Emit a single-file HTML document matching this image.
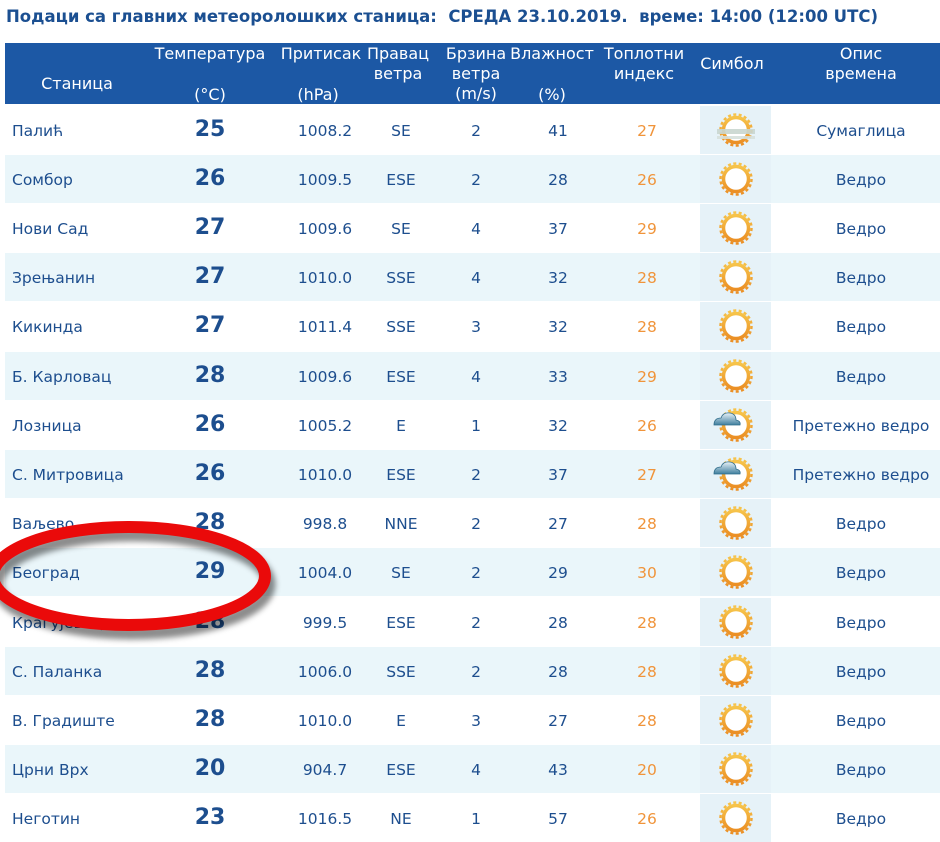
<!DOCTYPE html>
<html><head><meta charset="utf-8">
<style>
html,body{margin:0;padding:0;background:#fff;}
body{width:940px;height:830px;overflow:hidden;position:relative;font-family:"DejaVu Sans","Liberation Sans",sans-serif;}
.title{position:absolute;left:6px;top:7px;font-size:16.5px;font-weight:bold;color:#1b4f91;white-space:nowrap;}
.hdr{position:absolute;left:5px;top:43px;width:935px;height:61px;background:#1c58a5;}
.h{position:absolute;color:#fff;font-size:16px;line-height:20px;text-align:center;white-space:nowrap;transform:translateX(-50%);}
.row{position:absolute;left:5px;width:935px;height:48px;}
.alt{background:#eaf6fa;}
.sym{position:absolute;left:700px;width:71px;height:48px;background:#e6f2f8;}
.c{position:absolute;font-size:15.5px;color:#1d4e8e;text-align:center;white-space:nowrap;transform:translateX(-50%);}
.st{position:absolute;left:12px;font-size:15.5px;color:#1d4e8e;white-space:nowrap;}
.t{position:absolute;font-size:22px;font-weight:bold;color:#1d4e8e;transform:translateX(-50%);}
.hi{color:#f0943a;}
</style></head><body>
<div class="title">Подаци са главних метеоролошких станица:&nbsp; СРЕДА 23.10.2019.&nbsp; време: 14:00 (12:00 UTC)</div>
<div class="hdr"></div>
<div class="h" style="left:77px;top:74px;">Станица</div>
<div class="h" style="left:210px;top:44px;">Температура</div>
<div class="h" style="left:210px;top:85px;">(°C)</div>
<div class="h" style="left:321px;top:44px;">Притисак</div>
<div class="h" style="left:318px;top:85px;">(hPa)</div>
<div class="h" style="left:398px;top:44px;">Правац<br>ветра</div>
<div class="h" style="left:476px;top:44px;">Брзина<br>ветра<br>(m/s)</div>
<div class="h" style="left:552px;top:44px;">Влажност</div>
<div class="h" style="left:552px;top:85px;">(%)</div>
<div class="h" style="left:644px;top:44px;">Топлотни<br>индекс</div>
<div class="h" style="left:732px;top:54px;">Симбол</div>
<div class="h" style="left:861px;top:44px;">Опис<br>времена</div>

<svg width="0" height="0" style="position:absolute">
<defs>
<linearGradient id="sg" x1="0" y1="0" x2="0" y2="1"><stop offset="0" stop-color="#f6c34a"/><stop offset="1" stop-color="#eb8f25"/></linearGradient>
<linearGradient id="cg" x1="0" y1="0" x2="0" y2="1"><stop offset="0" stop-color="#e8f2f8"/><stop offset="1" stop-color="#3f7f9e"/></linearGradient>
<g id="sun"><circle cx="0" cy="0" r="15.5" fill="none" stroke="url(#sg)" stroke-width="2.5" stroke-dasharray="3 2.4"/><circle cx="0" cy="0" r="12.5" fill="#fff" stroke="url(#sg)" stroke-width="3.5"/></g>
</defs></svg>

<div id="rows"></div>
<script>
(function(){
var d=[
["Палић","25","1008.2","SE","2","41","27","haze","Сумаглица"],
["Сомбор","26","1009.5","ESE","2","28","26","sun","Ведро"],
["Нови Сад","27","1009.6","SE","4","37","29","sun","Ведро"],
["Зрењанин","27","1010.0","SSE","4","32","28","sun","Ведро"],
["Кикинда","27","1011.4","SSE","3","32","28","sun","Ведро"],
["Б. Карловац","28","1009.6","ESE","4","33","29","sun","Ведро"],
["Лозница","26","1005.2","E","1","32","26","cloud","Претежно ведро"],
["С. Митровица","26","1010.0","ESE","2","37","27","cloud","Претежно ведро"],
["Ваљево","28","998.8","NNE","2","27","28","sun","Ведро"],
["Београд","29","1004.0","SE","2","29","30","sun","Ведро"],
["Крагујевац","28","999.5","ESE","2","28","28","sun","Ведро"],
["С. Паланка","28","1006.0","SSE","2","28","28","sun","Ведро"],
["В. Градиште","28","1010.0","E","3","27","28","sun","Ведро"],
["Црни Врх","20","904.7","ESE","4","43","20","sun","Ведро"],
["Неготин","23","1016.5","NE","1","57","26","sun","Ведро"]];
var h="";
for(var i=0;i<d.length;i++){var r=d[i];var y0=105.5+i*49.2;var cy=y0+24;
h+='<div class="row'+(i%2?' alt':'')+'" style="top:'+y0+'px"></div>';
h+='<div class="sym" style="top:'+y0+'px"></div>';
var ty=cy-8;
h+='<div class="st" style="top:'+ty+'px">'+r[0]+'</div>';
h+='<div class="t" style="left:210px;top:'+(cy-13)+'px">'+r[1]+'</div>';
h+='<div class="c" style="left:325px;top:'+ty+'px">'+r[2]+'</div>';
h+='<div class="c" style="left:401px;top:'+ty+'px">'+r[3]+'</div>';
h+='<div class="c" style="left:476px;top:'+ty+'px">'+r[4]+'</div>';
h+='<div class="c" style="left:558px;top:'+ty+'px">'+r[5]+'</div>';
h+='<div class="c hi" style="left:647px;top:'+ty+'px">'+r[6]+'</div>';
h+='<div class="c" style="left:861px;top:'+ty+'px">'+r[8]+'</div>';
var s='<svg style="position:absolute;left:700px;top:'+y0+'px" width="71" height="48"><use href="#sun" x="36" y="24"/>';
if(r[7]=="haze"){s+='<rect x="17" y="23" width="38" height="5" fill="#c9d6cf" opacity="0.9"/><rect x="17" y="30" width="38" height="3" fill="#d6e0dc" opacity="0.9"/>';}
if(r[7]=="cloud"){s+='<path d="M14 24 q0-7 7-7 q2-6 9-5 q6 1 6 7 q5 1 4 5 z" fill="url(#cg)" stroke="#2f6c8a" stroke-width="0.8"/>';}
s+='</svg>';h+=s;}
document.getElementById("rows").innerHTML=h;
})();
</script>
<svg style="position:absolute;left:0;top:0" width="940" height="830">
<defs><filter id="sh" x="-20%" y="-30%" width="140%" height="160%"><feGaussianBlur stdDeviation="3"/></filter></defs>
<ellipse cx="131" cy="580" rx="136" ry="49" fill="none" stroke="#000" stroke-opacity="0.45" stroke-width="13" filter="url(#sh)" transform="translate(2,4)"/>
<ellipse cx="129" cy="576" rx="136" ry="49" fill="none" stroke="#ea0a0a" stroke-width="12"/>
</svg>
</body></html>
